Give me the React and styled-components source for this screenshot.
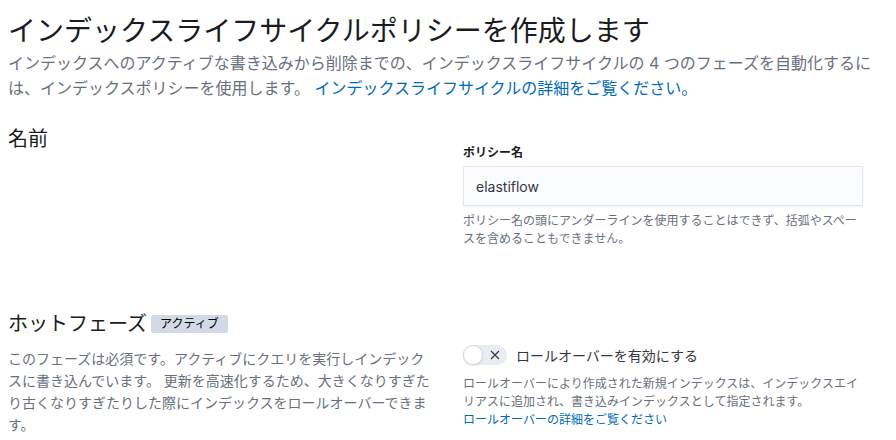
import styled, { createGlobalStyle } from "styled-components";

const GlobalStyle = createGlobalStyle`
  body {
    margin: 0;
    background: #fff;
    font-family: "Inter", "Noto Sans CJK JP", sans-serif;
    color: #343741;
  }
`;

const Page = styled.div`
  padding: 11px 8px 0 8px;
`;

const Title = styled.h1`
  margin: 0;
  font-size: 28px;
  font-weight: 400;
  line-height: 40px;
  color: #1a1c21;
`;

const Intro = styled.p`
  margin: 0;
  font-size: 16px;
  line-height: 25px;
  color: #69707d;
`;

const Link = styled.a`
  color: #006bb4;
  text-decoration: none;
`;

const Section = styled.div`
  display: grid;
  grid-template-columns: 1fr 1fr;
  column-gap: 30px;
  margin-top: ${(p) => p.top}px;
`;

const SectionTitle = styled.h2`
  margin: 0;
  display: flex;
  align-items: center;
  gap: 4px;
  font-size: 20px;
  font-weight: 400;
  line-height: 28px;
  color: #1a1c21;
`;

const Badge = styled.span`
  display: inline-block;
  background: #d3dae6;
  color: #000;
  font-size: 12px;
  line-height: 18px;
  padding: 0 9px;
  border-radius: 2px;
`;

const SectionDesc = styled.p`
  margin: 10px 0 0;
  font-size: 14px;
  line-height: 22px;
  color: #69707d;
`;

const Field = styled.div`
  max-width: 400px;
  padding-top: ${(p) => p.pad}px;
`;

const Label = styled.div`
  font-size: 12px;
  font-weight: 700;
  line-height: 18px;
  color: #1a1c21;
  margin-bottom: 4px;
`;

const Input = styled.div`
  height: 40px;
  box-sizing: border-box;
  border: 1px solid #e3e6eb;
  background: #fbfcfd;
  box-shadow: 0 1px 2px rgba(0, 0, 0, 0.06);
  padding: 0 12px;
  display: flex;
  align-items: center;
  font-size: 14px;
  color: #343741;
`;

const Help = styled.div`
  margin-top: ${(p) => p.gap || 6}px;
  font-size: 12px;
  line-height: 18px;
  color: #69707d;
`;

const SwitchRow = styled.div`
  display: flex;
  align-items: center;
  gap: 9px;
  font-size: 14px;
  color: #343741;
`;

const Track = styled.span`
  position: relative;
  width: 44px;
  height: 20px;
  border-radius: 10px;
  background: #e9edf3;
  flex-shrink: 0;
`;

const Knob = styled.span`
  position: absolute;
  left: 0;
  top: 0;
  width: 20px;
  height: 20px;
  box-sizing: border-box;
  border-radius: 50%;
  background: #fff;
  border: 1px solid #d3dae6;
  box-shadow: 0 1px 2px rgba(0, 0, 0, 0.1);
`;

const Cross = styled.svg`
  position: absolute;
  right: 7px;
  top: 5px;
`;

export default function App() {
  return (
    <Page>
      <GlobalStyle />
      <Title>インデックスライフサイクルポリシーを作成します</Title>
      <Intro>
        インデックスへのアクティブな書き込みから削除までの、インデックスライフサイクルの 4 つのフェーズを自動化するには、インデックスポリシーを使用します。{" "}
        <Link href="#">インデックスライフサイクルの詳細をご覧ください。</Link>
      </Intro>

      <Section top={24}>
        <div>
          <SectionTitle>名前</SectionTitle>
        </div>
        <Field pad={19}>
          <Label>ポリシー名</Label>
          <Input>elastiflow</Input>
          <Help>
            ポリシー名の頭にアンダーラインを使用することはできず、括弧やスペースを含めることもできません。
          </Help>
        </Field>
      </Section>

      <Section top={62}>
        <div>
          <SectionTitle>
            ホットフェーズ <Badge>アクティブ</Badge>
          </SectionTitle>
          <SectionDesc>
            このフェーズは必須です。アクティブにクエリを実行しインデックスに書き込んでいます。 更新を高速化するため、大きくなりすぎたり古くなりすぎたりした際にインデックスをロールオーバーできます。
          </SectionDesc>
        </div>
        <Field pad={35}>
          <SwitchRow>
            <Track>
              <Knob />
              <Cross width="10" height="10" viewBox="0 0 10 10">
                <path d="M1 1L9 9M9 1L1 9" stroke="#343741" strokeWidth="1.2" />
              </Cross>
            </Track>
            ロールオーバーを有効にする
          </SwitchRow>
          <Help gap={10}>
            ロールオーバーにより作成された新規インデックスは、インデックスエイリアスに追加され、書き込みインデックスとして指定されます。
            <br />
            <Link href="#">ロールオーバーの詳細をご覧ください</Link>
          </Help>
        </Field>
      </Section>
    </Page>
  );
}
